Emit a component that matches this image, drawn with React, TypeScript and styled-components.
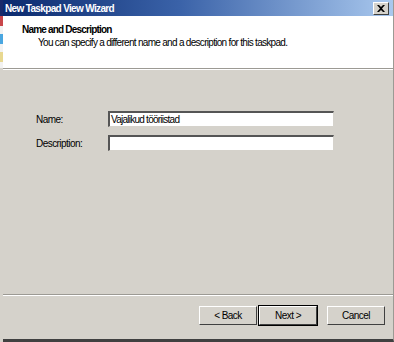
import React from 'react';
import styled, { createGlobalStyle } from 'styled-components';

// ─── Classic Windows tokens ──────────────────────────────────────────────
const C = {
  face: '#d5d2cb',
  shadow: '#9c9a94',
  darkShadow: '#404040',
  white: '#ffffff',
  black: '#000000',
  titleFrom: '#0b2a6e',
  titleTo: '#a9c8ee',
};

const FONT = `'Liberation Sans', Arial, sans-serif`;

const GlobalStyle = createGlobalStyle`
  * { box-sizing: border-box; }
  html, body { margin: 0; padding: 0; background: ${C.face}; }
  body { font-family: ${FONT}; font-size: 10px; letter-spacing: -0.55px; color: ${C.black}; }
`;

// ─── Window shell ──────────────────────────────────────────────────────────
const Window = styled.div`
  width: 394px;
  height: 342px;
  display: flex;
  background: ${C.face};
  overflow: hidden;
`;

const DesktopStrip = styled.div`
  width: 3px;
  flex-shrink: 0;
  background: linear-gradient(
    to bottom,
    #1a2a6a 0 16px,
    #c8464a 16px 26px,
    #f2f2f2 26px 34px,
    #4aa6e0 34px 44px,
    #f2f2f2 44px 52px,
    #e8d890 52px 62px,
    #f2f2f2 62px 68px,
    ${C.face} 68px
  );
`;

const Frame = styled.div`
  flex: 1;
  display: flex;
  flex-direction: column;
  border-right: 1px solid ${C.shadow};
  border-bottom: 3px solid ${C.darkShadow};
`;

// ─── Title bar ─────────────────────────────────────────────────────────────
const TitleBar = styled.div`
  height: 16px;
  display: flex;
  align-items: center;
  justify-content: space-between;
  padding: 0 4px 0 2px;
  background: linear-gradient(to right, ${C.titleFrom} 0%, #3a62a8 45%, ${C.titleTo} 100%);
  flex-shrink: 0;
`;

const TitleText = styled.span`
  color: ${C.white};
  font-weight: bold;
  font-size: 10px;
  letter-spacing: -0.65px;
`;

const CloseBtn = styled.div`
  width: 16px;
  height: 13px;
  background: ${C.face};
  border-top: 1px solid ${C.white};
  border-left: 1px solid ${C.white};
  border-right: 1px solid ${C.darkShadow};
  border-bottom: 1px solid ${C.darkShadow};
  display: flex;
  align-items: center;
  justify-content: center;
`;

// ─── Header ────────────────────────────────────────────────────────────────
const Header = styled.div`
  height: 52px;
  background: ${C.white};
  padding: 8px 0 0 19px;
  flex-shrink: 0;
`;

const HeaderTitle = styled.div`
  font-weight: bold;
  font-size: 10px;
  line-height: 12px;
  letter-spacing: -0.8px;
`;

const HeaderSub = styled.div`
  line-height: 12px;
  margin-top: 1px;
  padding-left: 16px;
  letter-spacing: -0.7px;
`;

const Etched = styled.div`
  height: 2px;
  flex-shrink: 0;
  border-top: 1px solid ${C.shadow};
  border-bottom: 1px solid ${C.white};
`;

// ─── Body ──────────────────────────────────────────────────────────────────
const Body = styled.div`
  flex: 1;
  padding: 41px 0 0 33px;
  display: flex;
  flex-direction: column;
  gap: 8px;
`;

const FieldRow = styled.div`
  display: grid;
  grid-template-columns: 72px 226px;
  align-items: center;
`;

const Label = styled.span``;

const TextBox = styled.div`
  height: 16px;
  background: ${C.white};
  border-top: 2px solid #555;
  border-left: 2px solid #555;
  border-right: 1px solid ${C.face};
  border-bottom: 1px solid ${C.face};
  line-height: 13px;
  padding-left: 1px;
  white-space: nowrap;
  letter-spacing: -0.75px;
`;

// ─── Footer ────────────────────────────────────────────────────────────────
const Footer = styled.div`
  height: 43px;
  display: flex;
  justify-content: flex-end;
  align-items: flex-start;
  padding: 10px 8px 0 0;
  flex-shrink: 0;
`;

const Button = styled.div<{ $default?: boolean; $gap?: number }>`
  width: 58px;
  height: 19px;
  margin-left: ${p => p.$gap ?? 0}px;
  background: ${C.face};
  display: flex;
  align-items: center;
  justify-content: center;
  border-top: 1px solid ${C.white};
  border-left: 1px solid ${C.white};
  border-right: 1px solid ${C.darkShadow};
  border-bottom: 1px solid ${C.darkShadow};
  box-shadow: ${p => (p.$default ? `0 0 0 1px ${C.black}` : 'none')};
`;

const App = () => (
  <>
    <GlobalStyle />
    <Window>
      <DesktopStrip />
      <Frame>
        <TitleBar>
          <TitleText>New Taskpad View Wizard</TitleText>
          <CloseBtn>
            <svg width="8" height="7" viewBox="0 0 8 7">
              <path d="M0 0 L2 0 L4 2 L6 0 L8 0 L5 3.5 L8 7 L6 7 L4 5 L2 7 L0 7 L3 3.5 Z" fill="#000" />
            </svg>
          </CloseBtn>
        </TitleBar>

        <Header>
          <HeaderTitle>Name and Description</HeaderTitle>
          <HeaderSub>You can specify a different name and a description for this taskpad.</HeaderSub>
        </Header>
        <Etched />

        <Body>
          <FieldRow>
            <Label>Name:</Label>
            <TextBox>Vajalikud tööriistad</TextBox>
          </FieldRow>
          <FieldRow>
            <Label>Description:</Label>
            <TextBox />
          </FieldRow>
        </Body>

        <Etched />
        <Footer>
          <Button>&lt; Back</Button>
          <Button $default $gap={2}>Next &gt;</Button>
          <Button $gap={10}>Cancel</Button>
        </Footer>
      </Frame>
    </Window>
  </>
);

export default App;
